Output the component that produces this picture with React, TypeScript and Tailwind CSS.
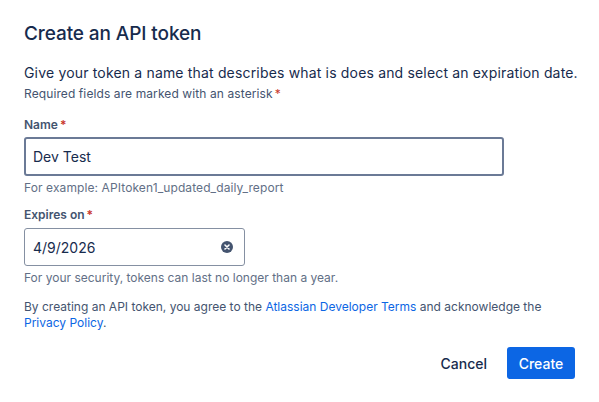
import { useState } from 'react';

function Req() {
  return <span className="ml-0.5 text-[#C9372C]">*</span>;
}

export default function App() {
  const [name, setName] = useState('Dev Test');
  const [date, setDate] = useState('4/9/2026');

  return (
    <div
      className="h-[402px] w-[599px] bg-white px-6 pt-[22px] text-[#172B4D]"
      style={{ fontFamily: 'Inter, "Noto Sans", sans-serif' }}
    >
      <h1 className="text-[19px] leading-6 font-medium tracking-[-0.1px]">Create an API token</h1>

      <p className="mt-[17px] text-[14px] leading-5 tracking-[0.17px] whitespace-nowrap">
        Give your token a name that describes what is does and select an expiration date.
      </p>
      <p className="mt-[3px] text-[12px] leading-4 tracking-[0.1px] text-[#44546F]">
        Required fields are marked with an asterisk
        <Req />
      </p>

      {/* Name field */}
      <label className="mt-[15px] block text-[12px] leading-4 font-semibold text-[#44546F]">
        Name
        <Req />
      </label>
      <input
        value={name}
        onChange={(e) => setName(e.target.value)}
        className="mt-[4px] block h-[39px] w-[480px] rounded-[3px] border-2 border-[#6B7A96] px-[7px] text-[14px] text-[#172B4D] outline-none"
      />
      <p className="mt-[4px] text-[12px] leading-4 tracking-[0.1px] text-[#626F86]">
        For example: APItoken1_updated_daily_report
      </p>

      {/* Expiration */}
      <label className="mt-[11px] block text-[12px] leading-4 font-semibold text-[#44546F]">
        Expires on
        <Req />
      </label>
      <div className="mt-[5px] flex h-[38px] w-[221px] items-center rounded-[3px] border border-[#8590A2] pr-[11px] pl-[8px]">
        <input
          value={date}
          onChange={(e) => setDate(e.target.value)}
          className="min-w-0 flex-1 text-[14px] text-[#172B4D] outline-none"
        />
        <svg width="12" height="12" viewBox="0 0 12 12" className="shrink-0">
          <circle cx="6" cy="6" r="6" fill="#44546F" />
          <path d="M4 4l4 4M8 4l-4 4" stroke="#fff" strokeWidth="1.6" strokeLinecap="round" />
        </svg>
      </div>
      <p className="mt-[4px] text-[12px] leading-4 text-[#626F86]">
        For your security, tokens can last no longer than a year.
      </p>

      <p className="mt-[13px] text-[12px] leading-4 text-[#44546F]">
        By creating an API token, you agree to the{' '}
        <a className="text-[#0C66E4]">Atlassian Developer Terms</a> and acknowledge the{' '}
        <a className="text-[#0C66E4]">Privacy Policy</a>.
      </p>

      <div className="mt-4 flex justify-end gap-2">
        <button className="h-8 rounded-[3px] px-3 text-[14px] font-medium text-[#172B4D]">
          Cancel
        </button>
        <button className="h-8 w-[68px] rounded-[3px] bg-[#0C66E4] text-[14px] font-medium text-white">
          Create
        </button>
      </div>
    </div>
  );
}
